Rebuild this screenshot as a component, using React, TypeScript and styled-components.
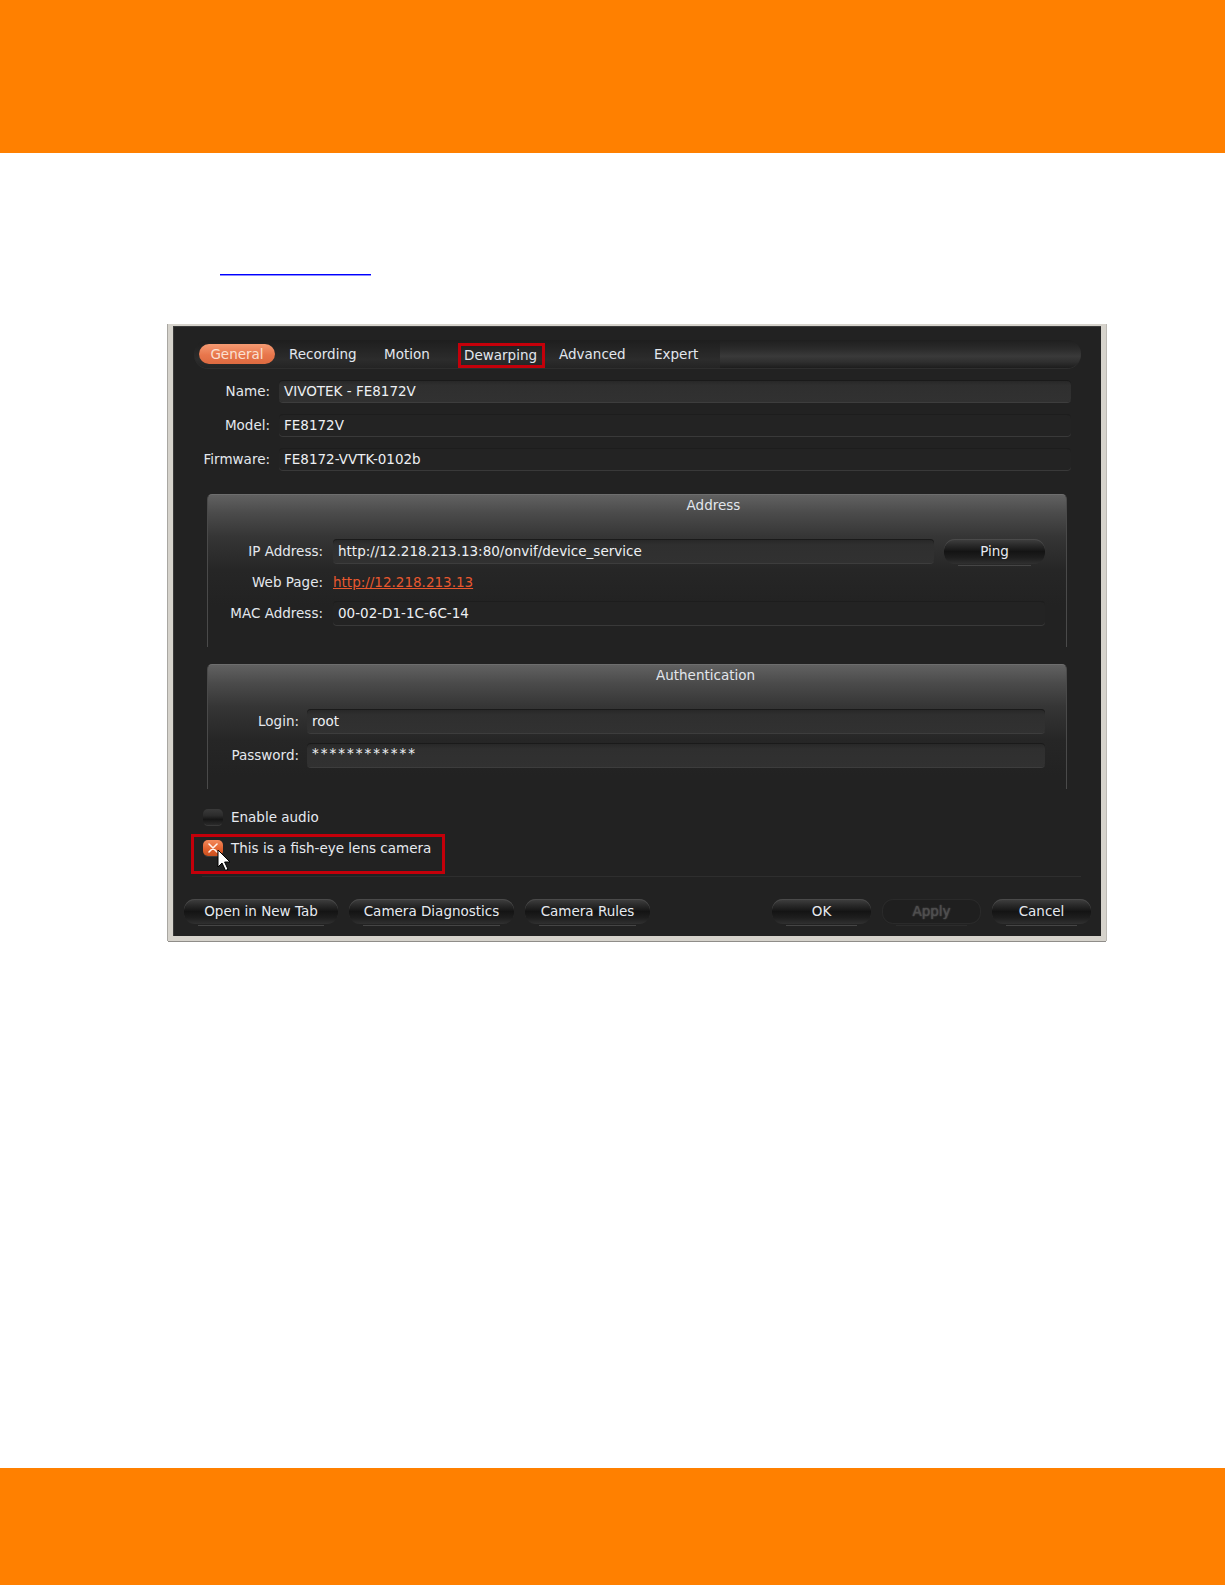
import React from "react";
import styled, { createGlobalStyle } from "styled-components";

const UI_FONT = `"DejaVu Sans", "Noto Sans", sans-serif`;

const GlobalStyle = createGlobalStyle`
  html, body {
    margin: 0;
    padding: 0;
    background: #ffffff;
  }
  #root {
    min-height: 1585px;
  }
`;

const TABS = [
  { label: "General", width: 76, active: true },
  { label: "Recording", width: 92 },
  { label: "Motion", width: 82 },
  { label: "Dewarping", width: 87, marked: true },
  { label: "Advanced", width: 92 },
  { label: "Expert", width: 66 },
];

const App: React.FC = () => {
  return (
    <Page>
      <GlobalStyle />
      <OrangeBar $height={153} />

      <Main>
        <LinkStub />

        <Dialog>
          <DialogInner>
            <TabBar>
              {TABS.map((tab) => (
                <Tab
                  key={tab.label}
                  $width={tab.width}
                  $active={tab.active}
                  $marked={tab.marked}
                >
                  {tab.label}
                </Tab>
              ))}
              <TabFiller />
            </TabBar>

            <TopForm>
              <Label>Name:</Label>
              <Field $editable>VIVOTEK - FE8172V</Field>
              <Label>Model:</Label>
              <Field>FE8172V</Field>
              <Label>Firmware:</Label>
              <Field>FE8172-VVTK-0102b</Field>
            </TopForm>

            <GroupBox>
              <GroupTitle $offset={174}>Address</GroupTitle>
              <GroupForm $labelWidth={115} $gap={10} $rowGap={7}>
                <Label>IP Address:</Label>
                <FieldWithButton>
                  <Field $editable $tall>
                    http://12.218.213.13:80/onvif/device_service
                  </Field>
                  <DarkButton $width={101}>Ping</DarkButton>
                </FieldWithButton>
                <Label>Web Page:</Label>
                <LinkCell>
                  <WebLink>http://12.218.213.13</WebLink>
                </LinkCell>
                <Label>MAC Address:</Label>
                <Field $tall>00-02-D1-1C-6C-14</Field>
              </GroupForm>
            </GroupBox>

            <GroupBox $gapAbove={17}>
              <GroupTitle $offset={158}>Authentication</GroupTitle>
              <GroupForm $labelWidth={91} $gap={8} $rowGap={10}>
                <Label>Login:</Label>
                <Field $editable $tall>
                  root
                </Field>
                <Label>Password:</Label>
                <Field $editable $tall>
                  <Stars>************</Stars>
                </Field>
              </GroupForm>
            </GroupBox>

            <CheckRow>
              <CheckBox />
              <CheckLabel>Enable audio</CheckLabel>
            </CheckRow>

            <MarkedCheckRow>
              <CheckBox $checked>
                <svg width="12" height="10" viewBox="0 0 12 10">
                  <path
                    d="M2 1 L10 9 M10 1 L2 9"
                    stroke="#fff3ec"
                    strokeWidth="1.6"
                    strokeLinecap="round"
                  />
                </svg>
              </CheckBox>
              <CheckLabel>This is a fish-eye lens camera</CheckLabel>
              <Cursor width="15" height="23" viewBox="0 0 15 23">
                <path
                  d="M1 1 L1 18 L5 14 L8.5 21.5 L11 20.3 L7.6 13 L13 13 Z"
                  fill="#ffffff"
                  stroke="#000000"
                  strokeWidth="1"
                  strokeLinejoin="round"
                />
              </Cursor>
            </MarkedCheckRow>

            <Separator />

            <ButtonRow>
              <ButtonGroup>
                <DarkButton $width={154}>Open in New Tab</DarkButton>
                <DarkButton $width={165}>Camera Diagnostics</DarkButton>
                <DarkButton $width={125}>Camera Rules</DarkButton>
              </ButtonGroup>
              <ButtonGroup>
                <DarkButton $width={99}>OK</DarkButton>
                <DarkButton $width={99} $disabled>
                  Apply
                </DarkButton>
                <DarkButton $width={99}>Cancel</DarkButton>
              </ButtonGroup>
            </ButtonRow>
          </DialogInner>
        </Dialog>
      </Main>

      <OrangeBar $height={117} />
    </Page>
  );
};

const Page = styled.div`
  min-height: 1585px;
  display: flex;
  flex-direction: column;
  font-family: ${UI_FONT};
`;

const OrangeBar = styled.div<{ $height: number }>`
  height: ${(p) => p.$height}px;
  flex-shrink: 0;
  background: #ff8000;
`;

const Main = styled.div`
  flex: 1;
  display: flex;
  flex-direction: column;
  align-items: flex-start;
`;

const LinkStub = styled.span`
  display: block;
  width: 151px;
  height: 0;
  margin: 121px 0 0 220px;
  border-bottom: 1px solid #0000ff;
  box-shadow: 0 1px 0 rgba(0, 0, 255, 0.45);
`;

const Dialog = styled.div`
  margin: 49px 0 0 168px;
  width: 938px;
  box-sizing: border-box;
  border-style: solid;
  border-color: #d6d3cc;
  border-width: 2px 5px 5px 5px;
  box-shadow: -1px 0 0 #a9a7a2, 1px 0 0 #bdbab4, 0 1px 0 #8f8d89;
`;

const DialogInner = styled.div`
  background: #222222;
  box-shadow: inset 1px 1px 0 #3a3a3a;
  padding: 14px 0 12px 0;
  display: flex;
  flex-direction: column;
  color: #e4e8ee;
  font-size: 13.5px;
`;

const TabBar = styled.div`
  height: 28px;
  margin: 0 20px 0 21px;
  padding-left: 5px;
  display: flex;
  align-items: center;
  border-radius: 14px;
  background: linear-gradient(
    180deg,
    #1e1e1e 0%,
    #262626 40%,
    #2c2c2c 70%,
    #242424 100%
  );
  box-shadow: 0 1px 0 #2e2e2e;
  overflow: hidden;
`;

const Tab = styled.div<{ $width: number; $active?: boolean; $marked?: boolean }>`
  width: ${(p) => p.$width}px;
  box-sizing: border-box;
  flex-shrink: 0;
  height: ${(p) => (p.$marked ? 25 : 20)}px;
  line-height: ${(p) => (p.$marked ? 19 : 20)}px;
  margin-right: 3px;
  padding-left: ${(p) => (p.$marked ? 3 : 11)}px;
  margin-top: ${(p) => (p.$marked ? 3 : 0)}px;
  white-space: nowrap;
  color: ${(p) => (p.$active ? "#fbe0d2" : "#e2e7ee")};
  text-align: ${(p) => (p.$active ? "center" : "left")};
  ${(p) =>
    p.$active &&
    `
    padding-left: 0;
    border-radius: 10px;
    background: linear-gradient(180deg, #f49a72 0%, #e8764c 55%, #dd6a40 100%);
  `}
  ${(p) =>
    p.$marked &&
    `
    border: 3px solid #c4000a;
  `}
`;

const TabFiller = styled.div`
  flex: 1;
  align-self: stretch;
  margin-left: 8px;
  background: linear-gradient(
    180deg,
    #1f1f1f 0%,
    #2a2a2a 30%,
    #3a3a3a 58%,
    #2f2f2f 78%,
    #1d1d1d 100%
  );
`;

const TopForm = styled.div`
  margin: 12px 30px 0 0;
  display: grid;
  grid-template-columns: 97px 1fr;
  column-gap: 9px;
  row-gap: 12px;
  grid-auto-rows: 22px;
  align-items: center;
`;

const Label = styled.div`
  text-align: right;
  white-space: nowrap;
  color: #e4e8ee;
`;

const Field = styled.div<{ $editable?: boolean; $tall?: boolean }>`
  height: ${(p) => (p.$tall ? 24 : 22)}px;
  line-height: ${(p) => (p.$tall ? 24 : 22)}px;
  box-sizing: border-box;
  padding-left: 5px;
  white-space: nowrap;
  overflow: hidden;
  color: #eef0f4;
  border-radius: 4px;
  background: ${(p) =>
    p.$editable
      ? "linear-gradient(180deg, #262626 0%, #2f2f2f 25%, #313131 100%)"
      : "#232323"};
  box-shadow: ${(p) =>
    p.$editable
      ? "inset 0 1px 0 #1a1a1a, 0 1px 0 #3d3d3d"
      : "inset 0 1px 0 #1d1d1d, 0 1px 0 #393939"};
`;

const GroupBox = styled.div<{ $gapAbove?: number }>`
  margin: ${(p) => p.$gapAbove ?? 24}px 34px 0 34px;
  padding: 0 21px 22px 0;
  border: 1px solid #4a4a4a;
  border-top-color: #6e6e6e;
  border-bottom: none;
  border-radius: 5px 5px 0 0;
  background: linear-gradient(
    180deg,
    #616161 0px,
    #4b4b4b 18px,
    #353535 42px,
    #262626 75px,
    #222222 110px
  );
`;

const GroupTitle = styled.div<{ $offset: number }>`
  height: 20px;
  line-height: 20px;
  text-align: center;
  padding-left: ${(p) => p.$offset}px;
  color: #e2e6ec;
`;

const GroupForm = styled.div<{
  $labelWidth: number;
  $gap: number;
  $rowGap: number;
}>`
  margin-top: 24px;
  display: grid;
  grid-template-columns: ${(p) => p.$labelWidth}px 1fr;
  column-gap: ${(p) => p.$gap}px;
  row-gap: ${(p) => p.$rowGap}px;
  grid-auto-rows: 24px;
  align-items: center;
`;

const FieldWithButton = styled.div`
  display: flex;
  align-items: center;
  gap: 10px;

  & > ${Field} {
    flex: 1;
  }
`;

const LinkCell = styled.div`
  line-height: 24px;
`;

const WebLink = styled.span`
  color: #e8582f;
  text-decoration: underline;
`;

const Stars = styled.span`
  letter-spacing: 2px;
  position: relative;
  top: -2px;
`;

const DarkButton = styled.div<{ $width: number; $disabled?: boolean }>`
  position: relative;
  width: ${(p) => p.$width}px;
  height: 25px;
  line-height: 24px;
  flex-shrink: 0;
  text-align: center;
  white-space: nowrap;
  border-radius: 11px;
  color: ${(p) => (p.$disabled ? "#4e4e4e" : "#e6eaf0")};
  ${(p) => p.$disabled && "text-shadow: 0 0 1.5px #6a6a6a;"}
  background: ${(p) =>
    p.$disabled
      ? "#1f1f1f"
      : "linear-gradient(180deg, #404040 0%, #2c2c2c 22%, #141414 50%, #1e1e1e 75%, #303030 100%)"};
  box-shadow: ${(p) =>
    p.$disabled
      ? "inset 0 0 0 1px #2a2a2a"
      : "inset 0 1px 0 #4a4a4a"};

  &::after {
    content: "";
    position: absolute;
    left: 14px;
    right: 14px;
    bottom: -2px;
    height: 1px;
    background: ${(p) => (p.$disabled ? "#2c2c2c" : "#454545")};
  }
`;

const CheckRow = styled.div`
  margin: 18px 0 0 30px;
  height: 20px;
  display: flex;
  align-items: center;
  gap: 8px;
`;

const MarkedCheckRow = styled.div`
  position: relative;
  align-self: flex-start;
  margin: 7px 0 0 18px;
  width: 254px;
  height: 40px;
  box-sizing: border-box;
  border: 3px solid #c4000a;
  padding: 1px 0 13px 9px;
  display: flex;
  align-items: center;
  gap: 8px;
`;

const CheckBox = styled.div<{ $checked?: boolean }>`
  width: 20px;
  height: 16px;
  border-radius: 5px;
  display: flex;
  align-items: center;
  justify-content: center;
  flex-shrink: 0;
  background: ${(p) =>
    p.$checked
      ? "linear-gradient(180deg, #f48a5c 0%, #e2622f 55%, #c9501f 100%)"
      : "linear-gradient(180deg, #3a3a3a 0%, #2c2c2c 40%, #161616 65%, #2a2a2a 100%)"};
  box-shadow: 0 2px 0 -1px #3a3a3a;
`;

const CheckLabel = styled.span`
  white-space: nowrap;
  color: #e6eaf0;
`;

const Cursor = styled.svg`
  position: absolute;
  left: 23px;
  top: 12px;
`;

const Separator = styled.div`
  margin: 2px 20px 0 29px;
  height: 1px;
  background: #2e2e2e;
`;

const ButtonRow = styled.div`
  margin: 22px 10px 0 11px;
  display: flex;
  justify-content: space-between;
`;

const ButtonGroup = styled.div`
  display: flex;
  gap: 11px;
`;

export default App;
